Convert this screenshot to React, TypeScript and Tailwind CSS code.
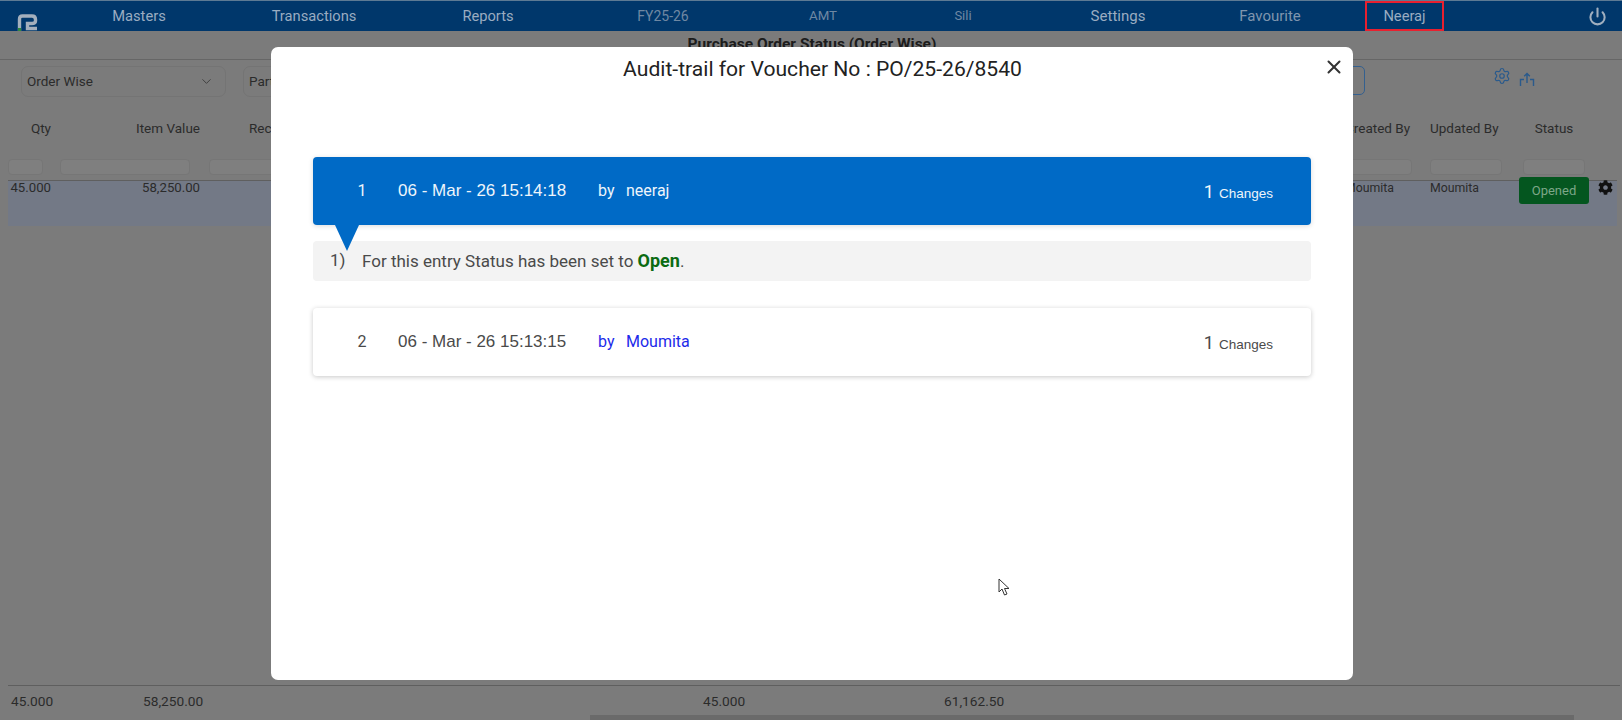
import { ChevronDown, Settings, Power, X } from "lucide-react";
import { FaCog } from "react-icons/fa";

const FONT = "[font-family:Roboto,'Liberation_Sans',sans-serif]";

const NAV = [
  { label: "Masters", w: "w-[176px]", cls: "text-[14.7px] text-[#9aacc1]" },
  { label: "Transactions", w: "w-[174px]", cls: "text-[14.7px] text-[#9aacc1]" },
  { label: "Reports", w: "w-[174px]", cls: "text-[14.7px] text-[#9aacc1]" },
  { label: "FY25-26", w: "w-[176px]", cls: "text-[14px] text-[#6f88a3]" },
  { label: "AMT", w: "w-[144px]", cls: "text-[13.3px] text-[#6f88a3]" },
  { label: "Sili", w: "w-[136px]", cls: "text-[13px] text-[#6f88a3]" },
  { label: "Settings", w: "w-[174px]", cls: "text-[15px] text-[#9aacc1]" },
  { label: "Favourite", w: "w-[130px]", cls: "text-[15px] text-[#7f95ae]" },
];

function Logo() {
  return (
    <svg width="22" height="17" viewBox="0 0 22 17" className="ml-[16px] mt-[13px] shrink-0">
      <path
        d="M3.5 17V5Q3.5 2 6.5 2H16Q19.5 2 19.5 5.5V7Q19.5 9.5 16 9.5H11.5V14.5H21"
        fill="none"
        stroke="#a3afbd"
        strokeWidth="3.4"
      />
      <rect x="2" y="14" width="3" height="3" fill="#2f8a3c" />
    </svg>
  );
}

function Columns({
  a,
  b,
  c,
  d,
  e,
  f,
  g,
  className,
}: {
  a?: React.ReactNode;
  b?: React.ReactNode;
  c?: React.ReactNode;
  d?: React.ReactNode;
  e?: React.ReactNode;
  f?: React.ReactNode;
  g?: React.ReactNode;
  className?: string;
}) {
  return (
    <div className={`flex ${className ?? ""}`}>
      <div className="ml-2 w-[43px] shrink-0 text-right">{a}</div>
      <div className="ml-[9px] w-[140px] shrink-0 text-right">{b}</div>
      <div className="ml-[9px] w-[100px] shrink-0">{c}</div>
      <div className="flex-1" />
      <div className="w-[67px] shrink-0">{d}</div>
      <div className="ml-[18px] w-[72px] shrink-0">{e}</div>
      <div className="ml-[17px] w-[70px] shrink-0 text-center">{f}</div>
      <div className="w-[33px] shrink-0">{g}</div>
    </div>
  );
}

function Filter({ w }: { w: string }) {
  return <div className={`h-[16px] ${w} rounded-[4px] border border-[#767676] bg-[#7f7f7f]`} />;
}

function AuditRow({ n, when, who, active }: { n: string; when: string; who: string; active?: boolean }) {
  return (
    <div
      className={`relative flex h-[68px] items-center rounded-[4px] pl-[37px] pr-[38px] text-[16px] ${
        active
          ? "bg-[#006ac6] text-[#eef5fb] shadow-[0_1px_5px_rgba(0,0,0,0.15)]"
          : "bg-white text-[#4a4a4a] shadow-[0_1px_5px_rgba(0,0,0,0.22)]"
      }`}
    >
      <span className="w-[24px] text-center">{n}</span>
      <span className="ml-[24px] w-[200px] text-[17px] [font-family:'Liberation_Sans',sans-serif]">{when}</span>
      <span className={`w-[28px] ${active ? "" : "text-[#1d2bea]"}`}>by</span>
      <span className={active ? "" : "text-[#1d2bea]"}>{who}</span>
      <span className="ml-auto flex items-baseline gap-[5px]">
        <span className="text-[18px]">1</span>
        <span className="text-[13.5px] [font-family:'Liberation_Sans',sans-serif]">Changes</span>
      </span>
      {active && (
        <span className="absolute left-[22px] top-[68px] h-0 w-0 border-x-[12px] border-t-[26px] border-x-transparent border-t-[#006ac6]" />
      )}
    </div>
  );
}

export default function App() {
  return (
    <div className={`relative h-[720px] w-[1622px] overflow-hidden bg-[#7b7b7b] text-[#262626] ${FONT}`}>
      {/* Header */}
      <header className="flex h-[31px] border-t border-[#5d7a94] bg-[#00376b]">
        <Logo />
        <nav className="ml-[13px] flex h-full items-center">
          {NAV.map((n) => (
            <div key={n.label} className={`${n.w} text-center ${n.cls}`}>
              {n.label}
            </div>
          ))}
          <div className="ml-[30px] flex h-[30px] w-[79px] items-center justify-center border-[2px] border-[#e8202f] text-[14.7px] text-[#9aacc1]">
            Neeraj
          </div>
        </nav>
        <div className="ml-auto mr-[15px] flex items-center">
          <Power size={19} strokeWidth={2.6} className="text-[#a0afbf]" />
        </div>
      </header>

      {/* Page behind the dialog */}
      <div className="h-[29px] border-b border-[#666] pl-[2px] pt-[2px] text-center text-[15.5px] font-bold leading-[22px] text-[#1c1c1c]">
        Purchase Order Status (Order Wise)
      </div>
      <div className="flex h-[38px] items-start pt-[6px] text-[13.5px] text-[#2b2b2b]">
        <div className="ml-[21px] flex h-[31px] w-[205px] items-center justify-between rounded-[7px] border border-[#747474] pl-[5px] pr-[11px]">
          <span>Order Wise</span>
          <ChevronDown size={15} strokeWidth={1.5} className="text-[#3d3d3d]" />
        </div>
        <div className="ml-[17px] flex h-[31px] w-[120px] items-center rounded-[7px] border border-[#747474] pl-[5px]">Party</div>
        <div className="ml-[962px] h-[29px] w-[40px] rounded-[5px] border border-[#34608f]" />
        <Settings size={18} strokeWidth={1.6} className="ml-[128px] mt-[1px] text-[#2a5a8c]" />
        <svg
          width="16"
          height="16"
          viewBox="0 0 16 16"
          fill="none"
          stroke="#2a5a8c"
          strokeWidth="1.4"
          className="ml-[8px] mt-[6px]"
        >
          <path d="M1.5 14V7.5H5M14.5 14V7.5H11M8 11V1.5M5.2 4.2 8 1.5l2.8 2.7" />
        </svg>
      </div>
      <Columns
        className="mt-[20px] h-[41px] text-[13.5px] text-[#2b2b2b]"
        a="Qty"
        b="Item Value"
        c={<span className="ml-[40px]">Received</span>}
        d="Created By"
        e="Updated By"
        f="Status"
      />
      <Columns
        className="h-[21px]"
        a={<Filter w="w-[35px]" />}
        b={<Filter w="w-[130px]" />}
        c={<Filter w="w-[100px]" />}
        d={<Filter w="w-[67px]" />}
        e={<Filter w="w-[72px]" />}
        f={
          <div className="flex justify-center">
            <Filter w="w-[62px]" />
          </div>
        }
      />
      <div className="ml-2 mr-[5px] h-[46px] border-t border-[#5f5f5f] bg-[#737986] text-[#2b2b2b]">
        <Columns
          className="-ml-2 -mr-[5px] -mt-[1px] leading-[14px]"
          a={<span className="text-[13.2px]">45.000</span>}
          b={<span className="text-[13.2px]">58,250.00</span>}
          d={<span className="text-[12.3px]">Moumita</span>}
          e={<span className="text-[12.3px]">Moumita</span>}
          f={
            <div className="-mt-[3px] flex h-[27px] items-center justify-center rounded-[3px] bg-[#04561f] text-[13px] text-[#7da788]">
              Opened
            </div>
          }
          g={<FaCog size={15} className="ml-[9px] text-[#111]" />}
        />
      </div>
      <div className="ml-2 mr-[2px] mt-[459px] border-t border-[#5f5f5f] pt-[7px] text-[13.7px] leading-[16px] text-[#2b2b2b]">
        <div className="flex">
          <span className="ml-[3px] w-[132px]">45.000</span>
          <span className="w-[560px]">58,250.00</span>
          <span className="w-[241px]">45.000</span>
          <span>61,162.50</span>
        </div>
      </div>
      <div className="ml-[590px] mt-[6px] h-[5px] w-[984px] bg-[#6a6a6a]" />

      {/* Dialog */}
      <div className="absolute left-[271px] top-[47px] h-[633px] w-[1082px] rounded-[7px] bg-white px-[42px] pt-[6px]">
        <div className="relative h-[104px] pl-[21px] pt-[1px] text-center text-[21.1px] leading-[30px] text-[#222]">
          Audit-trail for Voucher No : PO/25-26/8540
          <X size={22} strokeWidth={2.2} className="absolute right-[-34px] top-[3px] text-[#333]" />
        </div>
        <AuditRow n="1" when="06 - Mar - 26 15:14:18" who="neeraj" active />
        <div className="mt-[16px] flex h-[40px] items-center rounded-[4px] bg-[#f3f3f3] pl-[17px] text-[17px] text-[#4a4a4a]">
          <span className="w-[32px]">1)</span>
          <span>
            For this entry Status has been set to <b className="text-[18px] text-[#0b6b12]">Open</b>.
          </span>
        </div>
        <div className="mt-[27px]">
          <AuditRow n="2" when="06 - Mar - 26 15:13:15" who="Moumita" />
        </div>
      </div>

      {/* Mouse pointer */}
      <svg width="13" height="19" viewBox="0 0 13 19" className="absolute left-[998px] top-[578px]">
        <path d="M1 1v13l3-3 2.5 6 2.5-1-2.5-5.5H11z" fill="#fff" stroke="#333" strokeWidth="1" />
      </svg>
    </div>
  );
}
